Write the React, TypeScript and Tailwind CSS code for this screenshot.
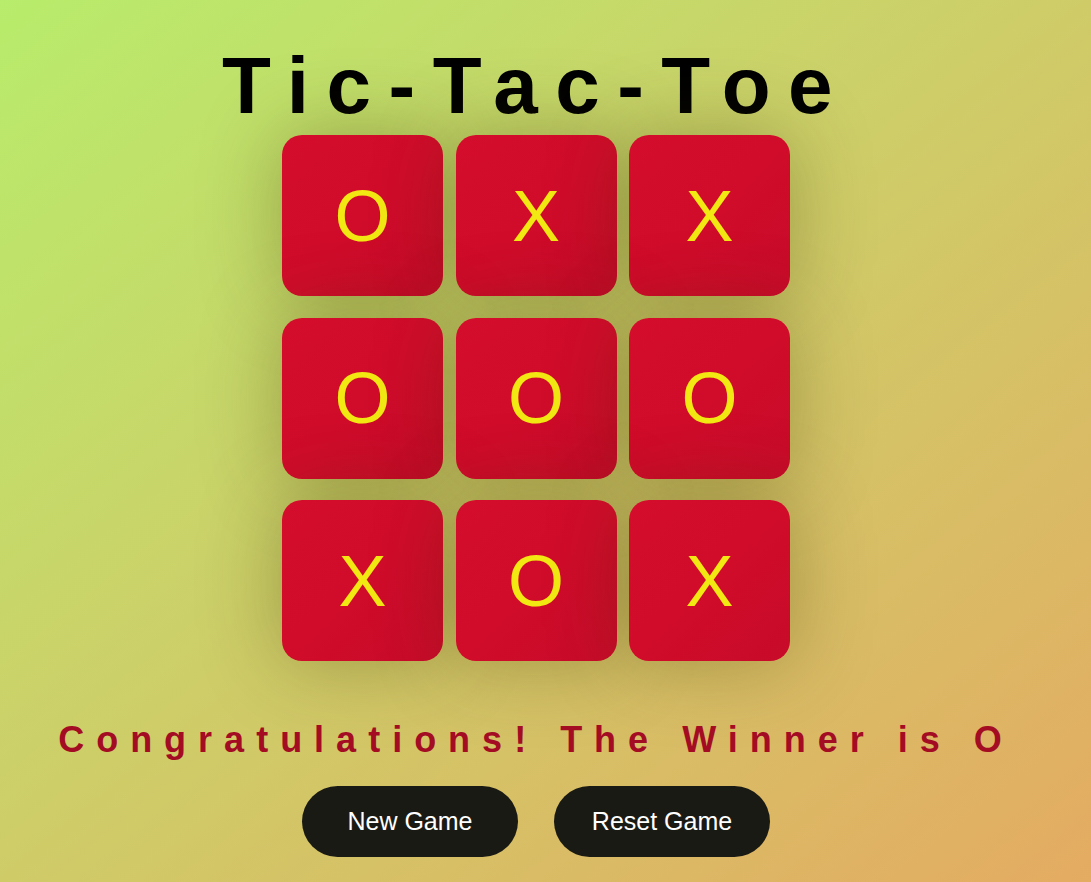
import { useState } from 'react';

type Mark = 'X' | 'O';

// final board state from the finished game
const initialBoard: Mark[] = ['O', 'X', 'X', 'O', 'O', 'O', 'X', 'O', 'X'];

export default function App() {
  const [board] = useState<Mark[]>(initialBoard);

  return (
    <div className="min-h-screen w-full bg-[linear-gradient(to_bottom_right,#b8ec6b,#cfcc68_50%,#e4ab62)] font-['Liberation_Sans',Arial,sans-serif]">
      <div className="w-[1072px] flex flex-col items-center pt-[40px] pb-[25px]">
        {/* Title */}
        <h1 className="text-[80px] leading-[92px] font-bold tracking-[17.5px] text-black">
          Tic-Tac-Toe
        </h1>

        {/* Board */}
        <div className="mt-[3px] grid grid-cols-[161px_161px_161px] gap-x-[12.5px] gap-y-[21.5px]">
          {board.map((mark, i) => (
            <button
              key={i}
              className="w-[161px] h-[161px] rounded-[20px] bg-gradient-to-br from-[#d30d2b] via-[#d00c2a] to-[#c70b29] shadow-[0_0_80px_rgba(60,50,0,0.34)] flex items-center justify-center text-[72px] leading-none text-[#f2e812]"
            >
              {mark}
            </button>
          ))}
        </div>

        {/* Result */}
        <p className="mt-[58px] text-[36px] leading-[41px] font-bold tracking-[12px] text-[#a30c23] font-['Comic_Sans_MS','Liberation_Sans',sans-serif]">
          Congratulations! The Winner is O
        </p>

        {/* Actions */}
        <div className="mt-[26px] flex gap-[36px]">
          <button className="w-[216px] h-[71px] rounded-full bg-[#1a1a14] text-white text-[25px]">
            New Game
          </button>
          <button className="w-[216px] h-[71px] rounded-full bg-[#1a1a14] text-white text-[25px]">
            Reset Game
          </button>
        </div>
      </div>
    </div>
  );
}
